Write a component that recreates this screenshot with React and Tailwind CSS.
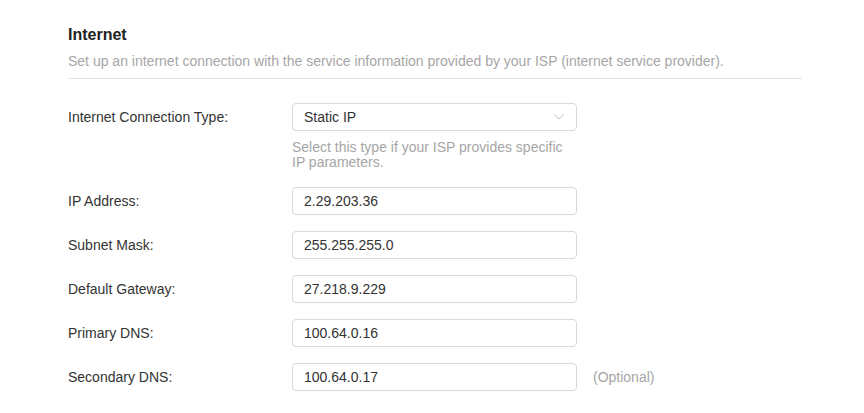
export default function App() {
  const rows = [
    ["IP Address:", "2.29.203.36"],
    ["Subnet Mask:", "255.255.255.0"],
    ["Default Gateway:", "27.218.9.229"],
    ["Primary DNS:", "100.64.0.16"],
    ["Secondary DNS:", "100.64.0.17", true],
  ];
  return (
    <div className="w-[864px] h-[413px] bg-white overflow-hidden text-[14px] text-[#333]" style={{ fontFamily: '"Liberation Sans", Arial, sans-serif' }}>
      <div className="ml-[68px] w-[734px] pt-[26px]">
        <div className="text-[16px] font-bold text-[#222] leading-[18px]">Internet</div>
        <div className="mt-[9px] text-[#a6a6a6] leading-[16px]">Set up an internet connection with the service information provided by your ISP (internet service provider).</div>
        <div className="mt-[9px] border-t border-[#e5e5e5]"></div>
        <div className="mt-[24px] flex">
          <div className="w-[224px] leading-[28px]">Internet Connection Type:</div>
          <div className="w-[285px]">
            <div className="h-[28px] border border-[#d9d9d9] rounded-[4px] flex items-center justify-between px-[11px]">
              <span className="text-[#333]">Static IP</span>
              <svg width="12" height="8" viewBox="0 0 12 8"><path d="M1 1.5l5 4.5 5-4.5" fill="none" stroke="#c0c0c0" strokeWidth="1" /></svg>
            </div>
            <div className="mt-[9px] text-[#a6a6a6] leading-[15px] pr-[8px]">Select this type if your ISP provides specific IP parameters.</div>
          </div>
        </div>
        <div className="mt-[17px] flex flex-col gap-[16px]">
          {rows.map(([l, v, opt]) => (
            <div key={l} className="flex items-center">
              <div className="w-[224px]">{l}</div>
              <div className="w-[285px] h-[28px] border border-[#d9d9d9] rounded-[4px] flex items-center px-[11px] text-[#333]">{v}</div>
              {opt && <div className="ml-[16px] text-[#a6a6a6]">(Optional)</div>}
            </div>
          ))}
        </div>
      </div>
    </div>
  );
}
